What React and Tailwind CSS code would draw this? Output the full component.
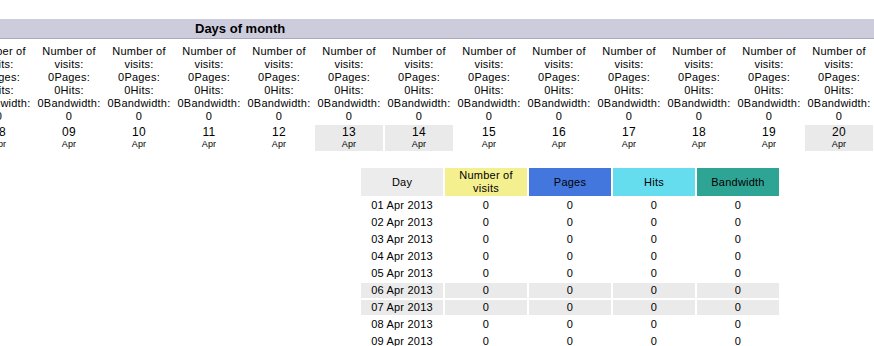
import React from "react";

const days = ["08", "09", "10", "11", "12", "13", "14", "15", "16", "17", "18", "19", "20"];
const weekend = ["13", "14", "20"];

const rows = [
  { day: "01 Apr 2013", off: false },
  { day: "02 Apr 2013", off: false },
  { day: "03 Apr 2013", off: false },
  { day: "04 Apr 2013", off: false },
  { day: "05 Apr 2013", off: false },
  { day: "06 Apr 2013", off: true },
  { day: "07 Apr 2013", off: true },
  { day: "08 Apr 2013", off: false },
  { day: "09 Apr 2013", off: false },
];

const DayColumn = ({ day }) => {
  const off = weekend.includes(day);
  return (
    <div className="w-[68px] shrink-0 flex flex-col items-center">
      <div className="text-center leading-[13px] whitespace-nowrap">
        Number of
        <br />
        visits:
        <br />
        0Pages:
        <br />
        0Hits:
        <br />
        0Bandwidth:
        <br />0
      </div>
      <div
        className={`w-full mt-[2px] h-[26px] flex flex-col items-center pt-[1px] ${
          off ? "bg-[#eaeaea]" : ""
        }`}
      >
        <span className="text-[12px] leading-[13px]">{day}</span>
        <span className="text-[9px] leading-[11px]">Apr</span>
      </div>
    </div>
  );
};

const App = () => {
  return (
    <div
      className="w-[874px] h-[346px] overflow-hidden bg-white text-black text-[11px] tracking-[0.02em]"
      style={{ fontFamily: '"Liberation Sans", Arial, sans-serif' }}
    >
      <div className="pt-[19px]">
        <div className="h-[20px] bg-[#ccccdd] border-b border-[#a9a9bb] pl-[195px] flex items-center">
          <span className="text-[13px] font-bold leading-none tracking-normal">Days of month</span>
        </div>
      </div>

      <div className="ml-[-35px] mt-[6px] flex gap-[2px]">
        {days.map((d) => (
          <DayColumn key={d} day={d} />
        ))}
      </div>

      <div className="ml-[361px] mt-[17px] flex flex-col gap-[2px] w-[418px]">
        <div className="flex gap-[2px] h-[28px]">
          <div className="w-[82px] bg-[#ececec] flex items-center justify-center">Day</div>
          <div className="w-[82px] bg-[#f4f090] flex items-center justify-center text-center leading-[13px]">
            Number of
            <br />
            visits
          </div>
          <div className="w-[82px] bg-[#4477dd] flex items-center justify-center">Pages</div>
          <div className="w-[82px] bg-[#66ddee] flex items-center justify-center">Hits</div>
          <div className="w-[82px] bg-[#2ea495] flex items-center justify-center">Bandwidth</div>
        </div>
        {rows.map((r) => (
          <div key={r.day} className="flex gap-[2px] h-[15px]">
            {[r.day, "0", "0", "0", "0"].map((v, i) => (
              <div
                key={i}
                className={`w-[82px] flex items-center justify-center leading-none ${
                  r.off ? "bg-[#eaeaea]" : ""
                }`}
              >
                {v}
              </div>
            ))}
          </div>
        ))}
      </div>
    </div>
  );
};

export default App;
